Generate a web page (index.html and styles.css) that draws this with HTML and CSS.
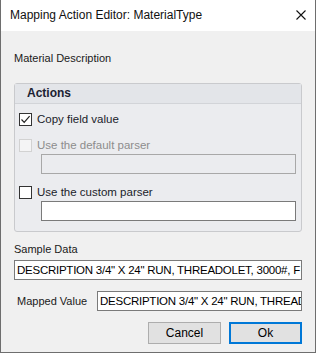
FILE: index.html
```html
<!DOCTYPE html>
<html lang="en">
    <head>
        <meta charset="UTF-8" />
        <title>Mapping Action Editor</title>
        <link rel="stylesheet" href="styles.css">
    </head>
    <body>
        <div class="dialog">
            <div class="titlebar">
                <span>Mapping Action Editor: MaterialType</span>
                <svg class="close" width="10" height="10" viewBox="0 0 10 10">
                    <path d="M0.5 0.5 L9.5 9.5 M9.5 0.5 L0.5 9.5" stroke="#111" stroke-width="1.1" fill="none"/>
                </svg>
            </div>
            <div class="content">
                <div class="field-name">Material Description</div>

                <div class="group">
                    <div class="group-head">Actions</div>
                    <div class="group-body">
                        <label class="check">
                            <span class="box checked">
                                <svg width="11" height="11" viewBox="0 0 11 11">
                                    <path d="M1.5 5.5 L4.2 8.3 L9.6 2.2" stroke="#222" stroke-width="1.2" fill="none"/>
                                </svg>
                            </span>
                            Copy field value
                        </label>
                        <label class="check disabled">
                            <span class="box"></span>
                            Use the default parser
                        </label>
                        <div class="textbox inset off"></div>
                        <label class="check">
                            <span class="box"></span>
                            Use the custom parser
                        </label>
                        <div class="textbox inset"></div>
                    </div>
                </div>

                <div class="label-top">Sample Data</div>
                <div class="textbox wide">DESCRIPTION 3/4" X 24" RUN, THREADOLET, 3000#, F</div>

                <div class="mapped">
                    <span>Mapped Value</span>
                    <div class="textbox">DESCRIPTION 3/4" X 24" RUN, THREAD</div>
                </div>

                <div class="buttons">
                    <button class="btn">Cancel</button>
                    <button class="btn default">Ok</button>
                </div>
            </div>
        </div>
    </body>
</html>
```

FILE: styles.css
```css
body {
    margin: 0;
    font: 11px "Liberation Sans", Arial, sans-serif;
    color: #1a1a1a;
}
.dialog {
    width: 314px;
    height: 352px;
    border: 1px solid #6e6e6e;
    border-top: none;
    background: #f0f0f0;
}
.titlebar {
    height: 31px;
    background: #fff;
    display: flex;
    align-items: center;
    justify-content: space-between;
    padding: 0 9px 0 9px;
    font-size: 12px;
    color: #111;
}
.titlebar span { margin-top: -1px; }
.close { margin-top: -1px; }
.content {
    padding: 0 13px;
}
.field-name {
    margin-top: 20px;
    line-height: 15px;
}
.group {
    margin-top: 17px;
    height: 147px;
    border: 1px solid #c9cacd;
    border-radius: 3px;
    background: #ebecef;
}
.group-head {
    height: 19px;
    line-height: 19px;
    padding-left: 12px;
    font-size: 12px;
    font-weight: bold;
    color: #1b2233;
    background: #e3e5e9;
    border-bottom: 1px solid #d2d4d8;
}
.group-body {
    padding: 9px 5px 0 4px;
}
.check {
    display: flex;
    align-items: center;
    gap: 5px;
    height: 13px;
    line-height: 13px;
    font-size: 11.5px;
    color: #201c2a;
}
.check + .check { margin-top: 13px; }
.box {
    width: 11px;
    height: 11px;
    border: 1px solid #333;
    background: #fff;
    display: flex;
    align-items: center;
    justify-content: center;
}
.check.disabled { color: #8d8d8d; margin-top: 13px; }
.check.disabled .box { border-color: #d2d2d2; background: #f4f4f5; }
.textbox {
    height: 18px;
    border: 1px solid #7a7a7a;
    background: #fff;
    line-height: 18px;
    padding-left: 2px;
    white-space: nowrap;
    overflow: hidden;
    font-size: 11.5px;
    letter-spacing: -0.25px;
    color: #000;
}
.inset {
    margin: 2px 0 0 22px;
}
.inset.off {
    background: #ebecef;
    border-color: #a8a8a8;
}
.inset + .check { margin-top: 12px; }
.label-top {
    margin-top: 10px;
    line-height: 15px;
}
.wide {
    margin-top: 3px;
}
.mapped {
    margin-top: 11px;
    display: flex;
    align-items: center;
    justify-content: space-between;
}
.mapped span { margin-left: 3px; }
.mapped .textbox {
    width: 201px;
}
.buttons {
    margin-top: 11px;
    display: flex;
    justify-content: flex-end;
    gap: 8px;
}
.btn {
    width: 73px;
    height: 22px;
    border: 1px solid #adadad;
    background: #e1e1e1;
    font: 12px "Liberation Sans", Arial, sans-serif;
    color: #000;
    padding: 0;
}
.btn.default {
    border: 2px solid #0078d7;
}
```
